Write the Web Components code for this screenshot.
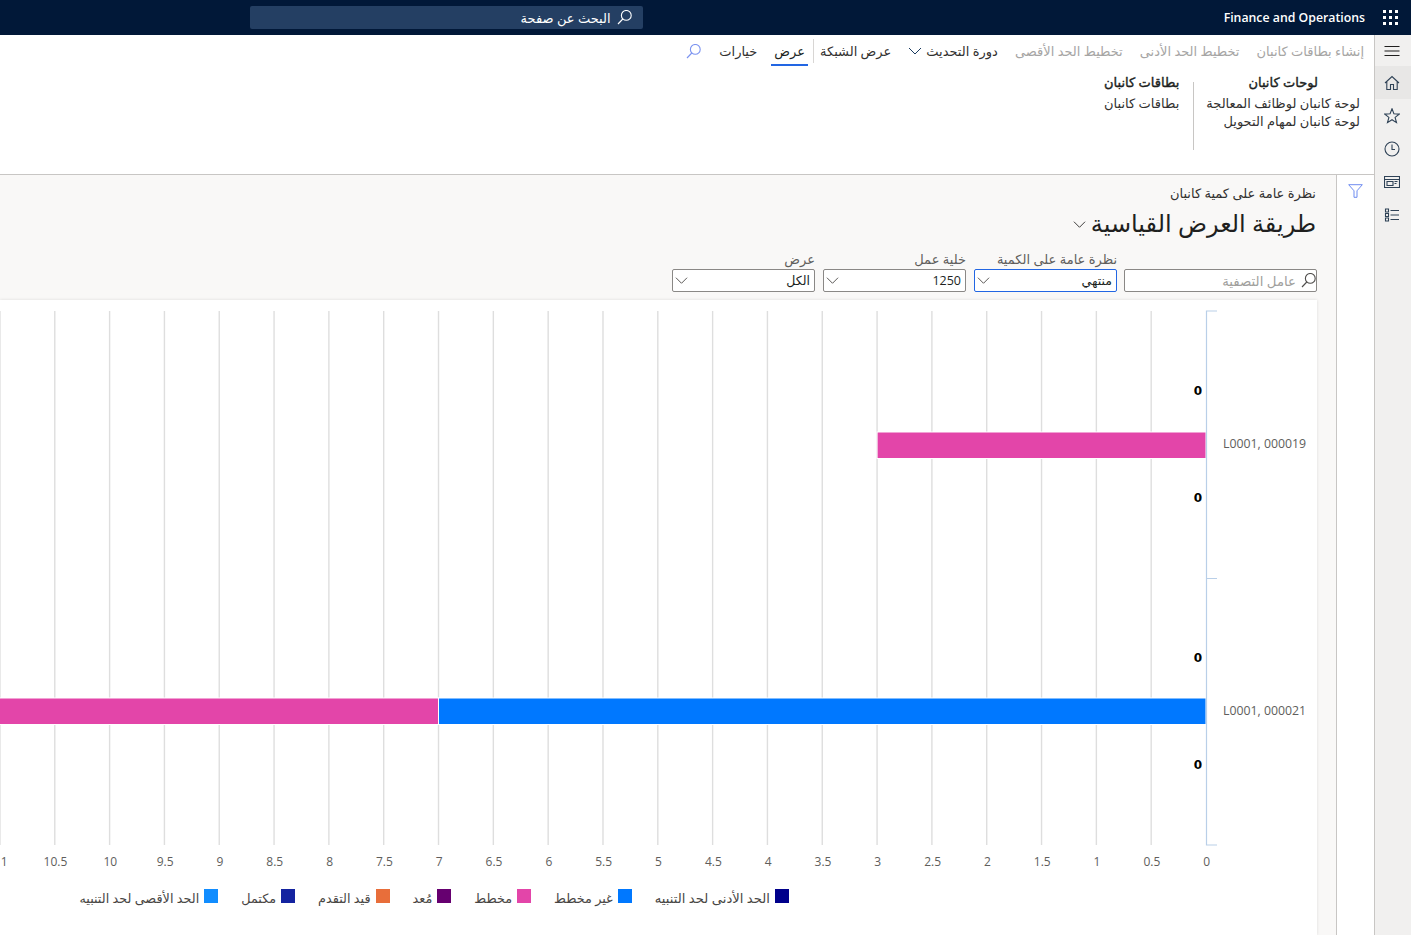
<!DOCTYPE html>
<html lang="ar" dir="rtl">
<head>
<meta charset="utf-8">
<title>Kanban</title>
<style>
    html, body {
        margin: 0;
        height: 100%;
        overflow: hidden;
    }
    body {
        font-family: "Open Sans", "DejaVu Sans", "Noto Sans", sans-serif;
        font-size: 13px;
        color: #201f1e;
        background: #fff;
    }
    .page {
        display: flex;
        height: 900px;
    }
    .main {
        flex: 1;
        min-width: 0;
        display: flex;
        flex-direction: column;
    }
    .lower {
        flex: 1;
        min-height: 0;
        display: flex;
        background: #f9f8f7;
    }
    .content {
        flex: 1;
        min-width: 0;
        display: flex;
        flex-direction: column;
    }
</style>
</head>
<body>
<app-topbar></app-topbar>
<div class="page">
    <app-rail></app-rail>
    <div class="main">
        <app-ribbon></app-ribbon>
        <div class="lower">
            <filter-rail></filter-rail>
            <div class="content">
                <page-header></page-header>
                <kanban-chart></kanban-chart>
            </div>
        </div>
    </div>
</div>

<script>
const CHEVRON = `<svg width="14" height="14" viewBox="0 0 14 14" fill="none" stroke="currentColor" stroke-width="1"><path d="M1 4l6 6 6-6"/></svg>`;
const SEARCH = `<svg width="15" height="15" viewBox="0 0 15 15" fill="none" stroke="currentColor" stroke-width="1.1"><circle cx="9.300" cy="5.400" r="4.900"/><path d="M5.800 9L1 14"/></svg>`;

class AppTopbar extends HTMLElement {
    constructor() {
        super();
        this.attachShadow({ mode: 'open' });
        let dots = '';
        for (let y = 0; y < 3; y++) {
            for (let x = 0; x < 3; x++) {
                dots += `<rect x="${x * 6}" y="${y * 6}" width="3" height="3"/>`;
            }
        }
        this.shadowRoot.innerHTML = `
            <style>
                :host {
                    display: flex;
                    align-items: center;
                    height: 35px;
                    background: #011838;
                    color: #fff;
                    box-sizing: border-box;
                    padding-right: 13px;
                }
                #waffle {
                    display: block;
                    width: 15px;
                    height: 15px;
                    fill: #fff;
                }
                #title {
                    direction: ltr;
                    font-family: "Open Sans", sans-serif;
                    font-size: 12.3px;
                    font-weight: 600;
                    margin-right: 18px;
                    white-space: nowrap;
                }
                #search {
                    display: flex;
                    align-items: center;
                    gap: 6px;
                    width: 393px;
                    height: 23px;
                    box-sizing: border-box;
                    margin-right: 581px;
                    padding: 0 11px;
                    background: #243f63;
                    border-radius: 2px;
                    font-size: 13px;
                }
                #search svg {
                    flex: none;
                }
            </style>
            <svg id="waffle" viewBox="0 0 15 15">${dots}</svg>
            <span id="title">Finance and Operations</span>
            <div id="search">${SEARCH}<span>البحث عن صفحة</span></div>
        `;
    }
}

class AppRail extends HTMLElement {
    constructor() {
        super();
        this.attachShadow({ mode: 'open' });
        this.shadowRoot.innerHTML = `
            <style>
                :host {
                    display: flex;
                    flex-direction: column;
                    flex: none;
                    width: 37px;
                    box-sizing: border-box;
                    background: #f1f0ef;
                    border-left: 1px solid #c8c6c4;
                    color: #2f4256;
                }
                .item {
                    display: flex;
                    align-items: center;
                    justify-content: center;
                    height: 33px;
                    box-sizing: border-box;
                    padding-right: 2px;
                }
                .item.first {
                    height: 31px;
                    color: #201f1e;
                }
                .item.first svg {
                    margin-top: 1px;
                }
                .item.active {
                    background: #e8e7e6;
                }
                svg {
                    display: block;
                    width: 16px;
                    height: 16px;
                    fill: none;
                    stroke: currentColor;
                    stroke-width: 1.1;
                }
            </style>
            <div class="item first"><svg viewBox="0 0 16 16"><path d="M0.500 3.500h15M0.500 8h15M0.500 12.500h15"/></svg></div>
            <div class="item active"><svg viewBox="0 0 16 16"><path d="M1 8L8 1.500 15 8M2.800 6.500v8h3.700V9.500h3v5h3.700v-8"/></svg></div>
            <div class="item"><svg viewBox="0 0 16 16"><path d="M8 0.800l1.900 5 5.300 .3-4.100 3.300 1.400 5.200L8 11.700l-4.500 2.900 1.400-5.200L0.800 6.100l5.300-.3z"/></svg></div>
            <div class="item"><svg viewBox="0 0 16 16"><circle cx="8" cy="8" r="7"/><path d="M8 3.500V8.500h3"/></svg></div>
            <div class="item"><svg viewBox="0 0 16 16"><path d="M0.500 2.500h15v11H0.500zM0.500 5.500h15M3 7.500h6v4H3zM10.500 7.500h3M10.500 9.500h2"/></svg></div>
            <div class="item"><svg viewBox="0 0 16 16"><path d="M1.500 2h3v3h-3zM1.500 6.500h3v3h-3zM1.500 11h3v3h-3zM6.500 3.500h8.500M6.500 8h8.500M6.500 12.500h8.500"/></svg></div>
        `;
    }
}

class AppRibbon extends HTMLElement {
    constructor() {
        super();
        this.attachShadow({ mode: 'open' });
        this.shadowRoot.innerHTML = `
            <style>
                :host {
                    display: block;
                    height: 140px;
                    box-sizing: border-box;
                    background: #fff;
                    border-bottom: 1px solid #c8c6c4;
                }
                #tabs {
                    display: flex;
                    align-items: center;
                    height: 32px;
                    padding-right: 10px;
                    white-space: nowrap;
                }
                .tab {
                    position: relative;
                    display: flex;
                    align-items: center;
                    gap: 4px;
                    height: 32px;
                    margin-left: 17px;
                    color: #323130;
                }
                .tab.off {
                    color: #a6a5a4;
                }
                .tab svg {
                    width: 14px;
                    height: 14px;
                    color: #1a3b60;
                }
                .tab.sep {
                    margin-left: 8px;
                    padding-left: 6px;
                    border-left: 1px solid #d8d6d4;
                    height: 24px;
                }
                .tab.on {
                    color: #201f1e;
                }
                .tab.on::after {
                    content: "";
                    position: absolute;
                    right: -3px;
                    left: -3px;
                    bottom: 1px;
                    height: 2px;
                    background: #2266e3;
                }
                #find {
                    color: #7b93f0;
                    display: flex;
                    margin-right: 1px;
                }
                #groups {
                    display: flex;
                    padding-right: 14px;
                    margin-top: 6px;
                }
                .group {
                    display: flex;
                    flex-direction: column;
                    line-height: 18px;
                    color: #323130;
                }
                .group b {
                    display: block;
                    font-weight: 400;
                    -webkit-text-stroke: 0.4px #201f1e;
                    color: #201f1e;
                    text-align: center;
                    margin-bottom: 3px;
                }
                #divider {
                    width: 1px;
                    height: 68px;
                    margin: 9px 12px 0 14px;
                    background: #c8c6c4;
                }
            </style>
            <div id="tabs">
                <span class="tab off">إنشاء بطاقات كانبان</span>
                <span class="tab off">تخطيط الحد الأدنى</span>
                <span class="tab off">تخطيط الحد الأقصى</span>
                <span class="tab">دورة التحديث ${CHEVRON}</span>
                <span class="tab sep">عرض الشبكة</span>
                <span class="tab on">عرض</span>
                <span class="tab">خيارات</span>
                <span id="find">${SEARCH}</span>
            </div>
            <div id="groups">
                <div class="group">
                    <b>لوحات كانبان</b>
                    <span>لوحة كانبان لوظائف المعالجة</span>
                    <span>لوحة كانبان لمهام التحويل</span>
                </div>
                <div id="divider"></div>
                <div class="group">
                    <b>بطاقات كانبان</b>
                    <span>بطاقات كانبان</span>
                </div>
            </div>
        `;
    }
}

class FilterRail extends HTMLElement {
    constructor() {
        super();
        this.attachShadow({ mode: 'open' });
        this.shadowRoot.innerHTML = `
            <style>
                :host {
                    display: flex;
                    justify-content: center;
                    flex: none;
                    width: 38px;
                    box-sizing: border-box;
                    padding-top: 9px;
                    background: #fff;
                    border-left: 1px solid #c8c6c4;
                }
                svg {
                    display: block;
                    width: 15px;
                    height: 14px;
                    fill: none;
                    stroke: #6f8cf0;
                }
            </style>
            <svg viewBox="0 0 15 14"><path d="M0.700 0.700h13.600L9 6.800v6.500H6V6.800z"/></svg>
        `;
    }
}

class FilterField extends HTMLElement {
    constructor() {
        super();
        this.attachShadow({ mode: 'open' });
        const label = this.getAttribute('label') || '';
        const value = this.getAttribute('value') || '';
        const isSearch = this.hasAttribute('search');
        const icon = isSearch ? SEARCH : CHEVRON;
        this.shadowRoot.innerHTML = `
            <style>
                :host {
                    display: flex;
                    flex-direction: column;
                    flex: none;
                    width: 143px;
                }
                :host([search]) {
                    width: 193px;
                    margin-left: -1px;
                }
                #label {
                    height: 18px;
                    line-height: 17px;
                    color: #605e5c;
                    font-size: 13px;
                    white-space: nowrap;
                }
                #box {
                    display: flex;
                    align-items: center;
                    justify-content: space-between;
                    height: 23px;
                    box-sizing: border-box;
                    padding: 0 4px 0 2px;
                    background: #fff;
                    border: 1px solid #8a8886;
                    border-radius: 2px;
                    font-size: 12.5px;
                    white-space: nowrap;
                }
                :host([focused]) #box {
                    border-color: #2266e3;
                }
                :host([search]) #box {
                    justify-content: flex-start;
                    padding: 0 0 0 0;
                    color: #a19f9d;
                    font-size: 13.3px;
                }
                :host([search]) #text {
                    order: 2;
                    margin-right: 5px;
                }
                :host([search]) #icon {
                    order: 1;
                }
                #icon {
                    display: flex;
                    color: #4f4d4b;
                }
                #box svg {
                    width: 13px;
                    height: 13px;
                }
                :host([search]) #box svg {
                    width: 15px;
                    height: 15px;
                }
            </style>
            <div id="label">${label}</div>
            <div id="box"><span id="text">${value}</span><span id="icon">${icon}</span></div>
        `;
    }
}

class PageHeader extends HTMLElement {
    constructor() {
        super();
        this.attachShadow({ mode: 'open' });
        this.shadowRoot.innerHTML = `
            <style>
                :host {
                    display: block;
                    flex: none;
                    height: 125px;
                    box-sizing: border-box;
                    padding: 8px 20px 0 0;
                    overflow: hidden;
                }
                #crumb {
                    height: 20px;
                    line-height: 20px;
                    color: #323130;
                    font-size: 13px;
                }
                #title {
                    display: flex;
                    align-items: center;
                    gap: 5px;
                    height: 40px;
                    margin-top: -1px;
                    font-size: 24px;
                    color: #201f1e;
                    white-space: nowrap;
                }
                #title svg {
                    width: 13px;
                    height: 13px;
                    margin-top: 4px;
                    color: #323130;
                }
                #filters {
                    display: flex;
                    gap: 8px;
                    margin-top: 9px;
                    margin-right: -1px;
                }
            </style>
            <div id="crumb">نظرة عامة على كمية كانبان</div>
            <div id="title">طريقة العرض القياسية ${CHEVRON}</div>
            <div id="filters">
                <filter-field search value="عامل التصفية"></filter-field>
                <filter-field focused label="نظرة عامة على الكمية" value="منتهي"></filter-field>
                <filter-field label="خلية عمل" value="1250"></filter-field>
                <filter-field label="عرض" value="الكل"></filter-field>
            </div>
        `;
    }
}

class KanbanChart extends HTMLElement {
    constructor() {
        super();
        this.attachShadow({ mode: 'open' });

        const zero = 1206;
        const unit = 109.64;
        const px = v => zero - v * unit;

        let grid = '';
        let ticks = '';
        for (let i = 0; i <= 22; i++) {
            const v = i / 2;
            if (i > 0) {
                grid += `<line x1="${px(v)}" x2="${px(v)}" y1="11" y2="545"/>`;
            }
            ticks += `<text x="${px(v) + 0.7}" y="566">${v}</text>`;
        }

        const bars = [
            { x1: 0, x2: 3, y: 132, color: '#e345a9' },
            { x1: 7, x2: 12, y: 398, color: '#e345a9' },
            { x1: 0, x2: 7, y: 398, color: '#0078ff' }
        ].map(b => `<rect x="${px(b.x2)}" y="${b.y}" width="${(b.x2 - b.x1) * unit}" height="26.500" fill="${b.color}" stroke="#fff" stroke-width="1"/>`).join('');

        const zeros = [95, 202, 362, 469].map(y => `<text x="1202" y="${y}">0</text>`).join('');

        const legend = [
            ['الحد الأدنى لحد التنبيه', '#00008b'],
            ['غير مخطط', '#0078ff'],
            ['مخطط', '#e345a9'],
            ['مُعد', '#660070'],
            ['قيد التقدم', '#e86e3a'],
            ['مكتمل', '#1423a0'],
            ['الحد الأقصى لحد التنبيه', '#118dff']
        ].map(([name, color]) => `<span class="entry"><i style="background:${color}"></i>${name}</span>`).join('');

        this.shadowRoot.innerHTML = `
            <style>
                :host {
                    display: block;
                    flex: 1;
                    min-height: 0;
                    width: 1317px;
                    margin-right: 19px;
                    margin-left: -20px;
                    background: #fff;
                    box-shadow: 0 0 3px rgba(0, 0, 0, 0.12);
                    overflow: hidden;
                }
                svg {
                    display: block;
                    direction: ltr;
                }
                .grid line {
                    stroke: #dedede;
                    stroke-width: 1.4;
                }
                .axis {
                    fill: none;
                    stroke: #b9cfe8;
                    stroke-width: 1.200;
                }
                .ticks text {
                    font: 12px "Open Sans", sans-serif;
                    fill: #605e5c;
                    text-anchor: middle;
                }
                .zeros text {
                    font: bold 12px "DejaVu Sans", sans-serif;
                    fill: #000;
                    text-anchor: end;
                }
                .cats text {
                    font: 12.300px "Open Sans", sans-serif;
                    fill: #605e5c;
                }
                #legend {
                    display: flex;
                    gap: 23px;
                    margin-right: 528px;
                    margin-top: 9px;
                    font-size: 12.800px;
                    color: #484644;
                    white-space: nowrap;
                }
                .entry {
                    display: flex;
                    align-items: flex-start;
                    gap: 5px;
                    line-height: 19px;
                }
                .entry:first-child {
                    font-size: 13.200px;
                }
                .entry i {
                    flex: none;
                    width: 14px;
                    height: 14px;
                }
            </style>
            <svg width="1317" height="580" viewBox="0 0 1317 580">
                <g class="grid">${grid}</g>
                ${bars}
                <path class="axis" d="M1217 11H1206.500V545H1217M1206.500 278.500H1217"/>
                <g class="ticks">${ticks}</g>
                <g class="zeros">${zeros}</g>
                <g class="cats">
                    <text x="1223" y="148">L0001, 000019</text>
                    <text x="1223" y="415">L0001, 000021</text>
                </g>
            </svg>
            <div id="legend">${legend}</div>
        `;
    }
}

customElements.define('app-topbar', AppTopbar);
customElements.define('app-rail', AppRail);
customElements.define('app-ribbon', AppRibbon);
customElements.define('filter-rail', FilterRail);
customElements.define('filter-field', FilterField);
customElements.define('page-header', PageHeader);
customElements.define('kanban-chart', KanbanChart);
</script>
</body>
</html>
